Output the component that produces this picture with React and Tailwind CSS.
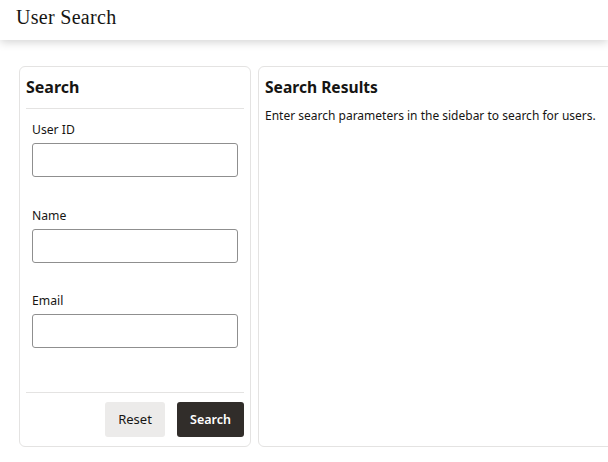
export default function App() {
  const fields = ["User ID", "Name", "Email"];
  return (
    <div className="min-h-screen w-[608px] h-[462px] overflow-hidden bg-white" style={{ fontFamily: '"Noto Sans", "Open Sans", sans-serif' }}>
      <header className="relative z-10 flex h-10 items-center bg-white px-4 shadow-[0_2px_9px_rgba(0,0,0,0.18)]">
        <h1 className="-mt-[6px] text-[20px] leading-none tracking-[0.3px] text-[#161513]" style={{ fontFamily: '"Liberation Serif", serif' }}>User Search</h1>
      </header>
      <main className="flex gap-[7px] pl-[19px] pt-[26px]">
        <aside className="flex h-[381px] w-[232px] shrink-0 flex-col rounded-md border border-[#e4e3e2] px-[6px]">
          <h2 className="border-b border-[#e4e3e2] pb-[9px] pt-[8px] text-[16px] font-bold leading-6 text-[#161513]">Search</h2>
          <div className="flex flex-1 flex-col px-[6px] pt-[11px]">
            {fields.map((f) => (
              <div key={f} className="mb-[28.5px] flex flex-col">
                <label className="text-[12.2px] leading-5 text-[#161513]">{f}</label>
                <input className="mt-[3px] h-[34px] w-full rounded-[3px] border border-[#8f8f8f] bg-white" />
              </div>
            ))}
          </div>
          <div className="flex justify-end gap-[12px] border-t border-[#e4e3e2] pb-[9px] pt-[9px]">
            <button className="h-[35px] w-[60px] rounded-[3px] bg-[#ecebea] pt-[1px] text-[13px] text-[#161513]">Reset</button>
            <button className="h-[35px] w-[67px] rounded-[3px] bg-[#312d2a] pt-[1px] text-[12.5px] font-semibold text-white">Search</button>
          </div>
        </aside>
        <section className="h-[381px] w-[370px] shrink-0 rounded-md border border-[#e4e3e2] px-[6px]">
          <h2 className="pt-[8px] text-[15.6px] font-bold leading-6 text-[#161513]">Search Results</h2>
          <p className="mt-[7px] whitespace-nowrap text-[12px] leading-5 text-[#161513]">Enter search parameters in the sidebar to search for users.</p>
        </section>
      </main>
    </div>
  );
}
